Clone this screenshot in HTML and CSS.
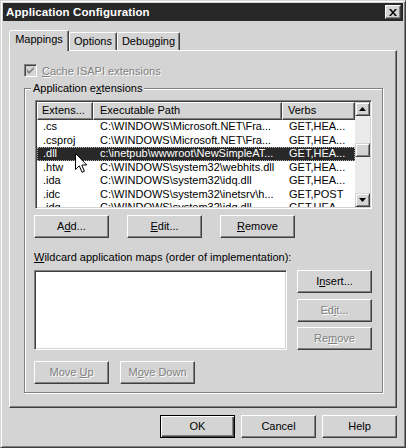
FILE: index.html
```html
<!DOCTYPE html>
<html>
<head>
<meta charset="utf-8">
<title>Application Configuration</title>
<link rel="stylesheet" href="styles.css">
</head>
<body>
<div class="window">
  <div class="titlebar">
    <span class="title">Application Configuration</span>
    <div class="close"><svg width="8" height="7" viewBox="0 0 8 7"><path d="M0 0h2l2 2.5L6 0h2L5 3.5 8 7H6L4 4.5 2 7H0l3-3.5z" fill="#000"/></svg></div>
  </div>
  <div class="tabs">
    <div class="tab active">Mappings</div>
    <div class="tab">Options</div>
    <div class="tab">Debugging</div>
  </div>
  <div class="panel">
    <div class="check disabled">
      <span class="box"><svg width="7" height="7" viewBox="0 0 7 7"><path d="M0 2v3l2 2 5-5V-0L2 4.5z" fill="#808080"/></svg></span>
      <span class="dtext"><u>C</u>ache ISAPI extensions</span>
    </div>
    <div class="group">
      <span class="legend">Application e<u>x</u>tensions</span>
      <div class="listview">
        <div class="lv-main">
          <div class="lv-header">
            <div class="hcell c1">Extens...</div>
            <div class="hcell c2">Executable Path</div>
            <div class="hcell c3">Verbs</div>
          </div>
          <div class="row"><div class="cell c1">.cs</div><div class="cell c2">C:\WINDOWS\Microsoft.NET\Fra...</div><div class="cell c3">GET,HEA...</div></div>
          <div class="row"><div class="cell c1">.csproj</div><div class="cell c2">C:\WINDOWS\Microsoft.NET\Fra...</div><div class="cell c3">GET,HEA...</div></div>
          <div class="row selected"><div class="cell c1">.dll</div><div class="cell c2">c:\inetpub\wwwroot\NewSimpleAT...</div><div class="cell c3">GET,HEA...</div></div>
          <div class="row"><div class="cell c1">.htw</div><div class="cell c2">C:\WINDOWS\system32\webhits.dll</div><div class="cell c3">GET,HEA...</div></div>
          <div class="row"><div class="cell c1">.ida</div><div class="cell c2">C:\WINDOWS\system32\idq.dll</div><div class="cell c3">GET,HEA...</div></div>
          <div class="row"><div class="cell c1">.idc</div><div class="cell c2">C:\WINDOWS\system32\inetsrv\h...</div><div class="cell c3">GET,POST</div></div>
          <div class="row"><div class="cell c1">.idq</div><div class="cell c2">C:\WINDOWS\system32\idq.dll</div><div class="cell c3">GET,HEA...</div></div>
        </div>
        <div class="scrollbar">
          <div class="sb-btn"><svg width="7" height="4" viewBox="0 0 7 4"><path d="M3.5 0L7 4H0z" fill="#000"/></svg></div>
          <div class="sb-track"><div class="sb-thumb"></div></div>
          <div class="sb-btn"><svg width="7" height="4" viewBox="0 0 7 4"><path d="M0 0h7L3.5 4z" fill="#000"/></svg></div>
        </div>
      </div>
      <div class="btnrow">
        <div class="btn"><span>A<u>d</u>d...</span></div>
        <div class="btn"><span><u>E</u>dit...</span></div>
        <div class="btn"><span><u>R</u>emove</span></div>
      </div>
      <div class="label"><u>W</u>ildcard application maps (order of implementation):</div>
      <div class="wildrow">
        <div class="wildlist"></div>
        <div class="sidebtns">
          <div class="btn"><span>I<u>n</u>sert...</span></div>
          <div class="btn disabled"><span>Ed<u>i</u>t...</span></div>
          <div class="btn disabled"><span>Re<u>m</u>ove</span></div>
        </div>
      </div>
      <div class="moverow">
        <div class="btn disabled"><span>Move <u>U</u>p</span></div>
        <div class="btn disabled"><span>M<u>o</u>ve Down</span></div>
      </div>
    </div>
  </div>
  <div class="footer">
    <div class="btn default"><span>OK</span></div>
    <div class="btn"><span>Cancel</span></div>
    <div class="btn"><span>Help</span></div>
  </div>
</div>
<svg class="cursor" width="13" height="21" viewBox="0 0 13 21"><path d="M0.5 0.5V16.5L4.3 12.8L7 19.3L9.4 18.3L6.8 12H11.8Z" fill="#fff" stroke="#000" stroke-width="1" stroke-linejoin="miter"/></svg>
</body>
</html>
```
FILE: styles.css
```css
* { box-sizing: border-box; }
html, body { margin: 0; padding: 0; }
body {
  width: 406px;
  height: 448px;
  overflow: hidden;
  position: relative;
  background: #d4d4d4;
  font-family: "Liberation Sans", Arial, sans-serif;
  font-size: 11px;
  color: #000;
}
u { text-decoration: underline; text-underline-offset: 1px; }

.window {
  width: 406px;
  height: 448px;
  background: #d4d4d4;
  border: 1px solid;
  border-color: #d4d4d4 #404040 #404040 #d4d4d4;
  box-shadow: inset 1px 1px #fff, inset -1px -1px #808080;
  padding: 2px;
  display: flex;
  flex-direction: column;
}

.titlebar {
  height: 18px;
  flex: none;
  background: #282828;
  display: flex;
  align-items: center;
  justify-content: space-between;
  padding: 0 2px 0 3px;
}
.title { color: #fff; font-weight: bold; font-size: 11.5px; letter-spacing: 0.1px; }
.close {
  width: 16px;
  height: 14px;
  background: #d4d4d4;
  border: 1px solid;
  border-color: #fff #404040 #404040 #fff;
  box-shadow: inset -1px -1px #808080;
  display: flex;
  align-items: center;
  justify-content: center;
}

.tabs {
  display: flex;
  align-items: flex-end;
  height: 20px;
  flex: none;
  margin-top: 9px;
  padding-left: 6px;
}
.tab {
  height: 18px;
  border: 1px solid;
  border-bottom: none;
  border-color: #fff #404040 transparent #fff;
  box-shadow: inset -1px 0 #808080;
  border-radius: 2px 2px 0 0;
  text-align: center;
  padding-top: 2px;
  line-height: 13px;
  background: #d4d4d4;
}
.tab:nth-child(2) { width: 48px; }
.tab:nth-child(3) { width: 63px; }
.tab.active {
  width: 60px;
  height: 21px;
  margin-bottom: -1px;
  position: relative;
  z-index: 1;
}

.panel {
  margin: 0 6px;
  height: 358px;
  flex: none;
  border: 1px solid;
  border-color: #fff #404040 #404040 #fff;
  box-shadow: inset -1px -1px #808080;
  padding: 13px 0 0 14px;
}

.check { display: flex; align-items: center; height: 13px; gap: 5px; }
.box {
  width: 13px;
  height: 13px;
  border: 1px solid;
  border-color: #808080 #fff #fff #808080;
  box-shadow: inset 1px 1px #404040, inset -1px -1px #d4d4d4;
  background: #d4d4d4;
  display: flex;
  align-items: center;
  justify-content: center;
}
.dtext, .disabled { color: #808080; text-shadow: 1px 1px 0 #fff; }

.group {
  position: relative;
  margin-top: 11px;
  width: 359px;
  height: 305px;
  border: 1px solid #808080;
  box-shadow: inset 1px 1px #fff, 1px 1px #fff;
  padding: 11px 10px 0 9px;
}
.legend {
  position: absolute;
  top: -7px;
  left: 6px;
  background: #d4d4d4;
  padding: 0 2px;
  line-height: 13px;
}

.listview {
  margin-left: 1px;
  width: 337px;
  height: 109px;
  border: 1px solid;
  border-color: #808080 #fff #fff #808080;
  box-shadow: inset 1px 1px #404040, inset -1px -1px #d4d4d4;
  padding: 1px;
  background: #fff;
  display: flex;
}
.lv-main { flex: 1; overflow: hidden; }
.lv-header { display: flex; height: 18px; }
.hcell {
  height: 18px;
  background: #d4d4d4;
  border: 1px solid;
  border-color: #fff #404040 #404040 #fff;
  box-shadow: inset -1px -1px #808080;
  line-height: 15px;
  padding-left: 6px;
  white-space: nowrap;
  overflow: hidden;
}
.c1 { width: 56px; flex: none; }
.c2 { width: 189px; flex: none; }
.c3 { width: 73px; flex: none; }
.hcell.c1 { padding-left: 4px; }
.hcell.c3 { padding-left: 5px; }
.row { display: flex; height: 13.5px; line-height: 13.5px; }
.cell { white-space: nowrap; overflow: hidden; padding-left: 7px; }
.cell.c1 { padding-left: 6px; }
.row.selected {
  background: #282828;
  color: #fff;
  outline: 1px dotted #b0b0b0;
  outline-offset: -1px;
}

.scrollbar {
  width: 15px;
  flex: none;
  display: flex;
  flex-direction: column;
  background: #ebebeb;
}
.sb-btn, .sb-thumb {
  height: 14px;
  flex: none;
  background: #d4d4d4;
  border: 1px solid;
  border-color: #d4d4d4 #404040 #404040 #d4d4d4;
  box-shadow: inset 1px 1px #fff, inset -1px -1px #808080;
  display: flex;
  align-items: center;
  justify-content: center;
}
.sb-track { flex: 1; }
.sb-thumb { margin-top: 27px; }

.btn {
  width: 75px;
  height: 23px;
  flex: none;
  background: #d4d4d4;
  border: 1px solid;
  border-color: #fff #404040 #404040 #fff;
  box-shadow: inset -1px -1px #808080;
  display: flex;
  align-items: center;
  justify-content: center;
  line-height: 13px;
  white-space: nowrap;
}
.btn.default {
  border-color: #000;
  box-shadow: inset 1px 1px #fff, inset -1px -1px #404040, inset -2px -2px #808080;
}

.btnrow { display: flex; gap: 18px; margin-top: 6px; }
.label { margin-top: 13px; line-height: 13px; }
.wildrow { display: flex; gap: 10px; margin-top: 6px; }
.wildlist {
  width: 253px;
  height: 80px;
  background: #fff;
  border: 1px solid;
  border-color: #808080 #fff #fff #808080;
  box-shadow: inset 1px 1px #404040, inset -1px -1px #d4d4d4;
}
.sidebtns { display: flex; flex-direction: column; gap: 5.5px; }
.moverow { display: flex; gap: 11px; margin-top: 11px; }

.footer {
  display: flex;
  justify-content: flex-end;
  gap: 6px;
  padding-right: 6px;
  margin-top: 7px;
}

.cursor { position: absolute; left: 75px; top: 153px; }
```
